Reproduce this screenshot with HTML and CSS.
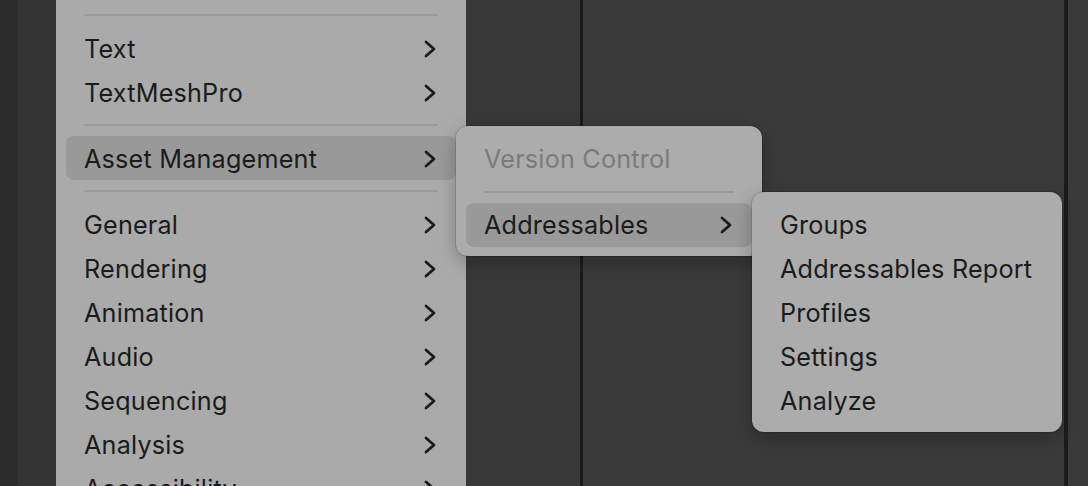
FILE: index.html
```html
<!DOCTYPE html>
<html>
<head>
<meta charset="utf-8">
<link rel="stylesheet" href="styles.css">
</head>
<body>
<div class="desk">
  <div class="edge-a"></div>
  <div class="edge-b"></div>
  <div class="menu main">
    <div class="sep"></div>
    <div class="item"><span>Text</span><svg class="chev" viewBox="0 0 12 18"><polyline points="2,2 10,9 2,16"/></svg></div>
    <div class="item"><span>TextMeshPro</span><svg class="chev" viewBox="0 0 12 18"><polyline points="2,2 10,9 2,16"/></svg></div>
    <div class="sep"></div>
    <div class="item active"><span>Asset Management</span><svg class="chev" viewBox="0 0 12 18"><polyline points="2,2 10,9 2,16"/></svg></div>
    <div class="sep"></div>
    <div class="item"><span>General</span><svg class="chev" viewBox="0 0 12 18"><polyline points="2,2 10,9 2,16"/></svg></div>
    <div class="item"><span>Rendering</span><svg class="chev" viewBox="0 0 12 18"><polyline points="2,2 10,9 2,16"/></svg></div>
    <div class="item"><span>Animation</span><svg class="chev" viewBox="0 0 12 18"><polyline points="2,2 10,9 2,16"/></svg></div>
    <div class="item"><span>Audio</span><svg class="chev" viewBox="0 0 12 18"><polyline points="2,2 10,9 2,16"/></svg></div>
    <div class="item"><span>Sequencing</span><svg class="chev" viewBox="0 0 12 18"><polyline points="2,2 10,9 2,16"/></svg></div>
    <div class="item"><span>Analysis</span><svg class="chev" viewBox="0 0 12 18"><polyline points="2,2 10,9 2,16"/></svg></div>
    <div class="item"><span>Accessibility</span><svg class="chev" viewBox="0 0 12 18"><polyline points="2,2 10,9 2,16"/></svg></div>
  </div>
  <div class="pane pane-a"></div>
  <div class="divider"></div>
  <div class="pane pane-b"></div>
  <div class="divider wide"></div>
  <div class="pane pane-c"></div>

  <div class="menu sub sub1">
    <div class="item disabled"><span>Version Control</span></div>
    <div class="sep"></div>
    <div class="item active"><span>Addressables</span><svg class="chev" viewBox="0 0 12 18"><polyline points="2,2 10,9 2,16"/></svg></div>
  </div>

  <div class="menu sub sub2">
    <div class="item"><span>Groups</span></div>
    <div class="item"><span>Addressables Report</span></div>
    <div class="item"><span>Profiles</span></div>
    <div class="item"><span>Settings</span></div>
    <div class="item"><span>Analyze</span></div>
  </div>
</div>
</body>
</html>
```

FILE: styles.css
```css
* { box-sizing: border-box; }
html, body {
  margin: 0;
  padding: 0;
  width: 1088px;
  height: 486px;
  overflow: hidden;
  background: #3a3a3a;
}
.desk {
  position: relative;
  display: flex;
  width: 1088px;
  height: 486px;
  overflow: hidden;
  font-family: Inter, "Noto Sans", sans-serif;
  font-size: 25.2px;
  color: #1b1b1b;
}
.edge-a { width: 18px; background: #2c2c2c; flex: none; }
.edge-b { width: 38px; background: #333333; flex: none; }
.pane-a { width: 114px; background: #383838; flex: none; }
.pane-b { width: 481px; background: #3a3a3a; flex: none; }
.pane-c { flex: 1; background: #3a3a3a; }
.divider { width: 3px; background: #1b1b1b; flex: none; }
.divider.wide { width: 4px; }

.menu {
  background: #aaaaaa;
  display: flex;
  flex-direction: column;
}
.main {
  width: 410px;
  flex: none;
  height: 540px;
  padding: 4px 10px 0 10px;
}
.main .item { padding-top: 2px; }
.item {
  height: 44px;
  flex: none;
  display: flex;
  align-items: center;
  justify-content: space-between;
  padding: 0 20px 0 18px;
  border-radius: 8px;
  letter-spacing: 0.2px;
  white-space: nowrap;
}
.item.active { background: #999999; }
.item.disabled { color: #7b7b7b; }
.sep {
  height: 22px;
  flex: none;
  margin: 0 18px;
  position: relative;
}
.sep::after {
  content: "";
  position: absolute;
  left: 0; right: 0;
  top: 10px;
  height: 2px;
  background: #9b9b9b;
}
.chev {
  width: 12px;
  height: 18px;
  flex: none;
  fill: none;
  stroke: #1b1b1b;
  stroke-width: 2.8;
  stroke-linecap: round;
  stroke-linejoin: round;
}
.sub {
  position: absolute;
  border-radius: 12px;
  padding: 11px 10px 9px 10px;
  background: #acacac;
  box-shadow: 0 0 0 1px rgba(0,0,0,0.12), 0 6px 18px rgba(0,0,0,0.25);
}
.sub1 {
  left: 456px;
  top: 126px;
  width: 306px;
  height: 130px;
}
.sub2 {
  left: 752px;
  top: 192px;
  width: 310px;
  height: 240px;
}
.sub2 .item { padding-right: 0; }
```
